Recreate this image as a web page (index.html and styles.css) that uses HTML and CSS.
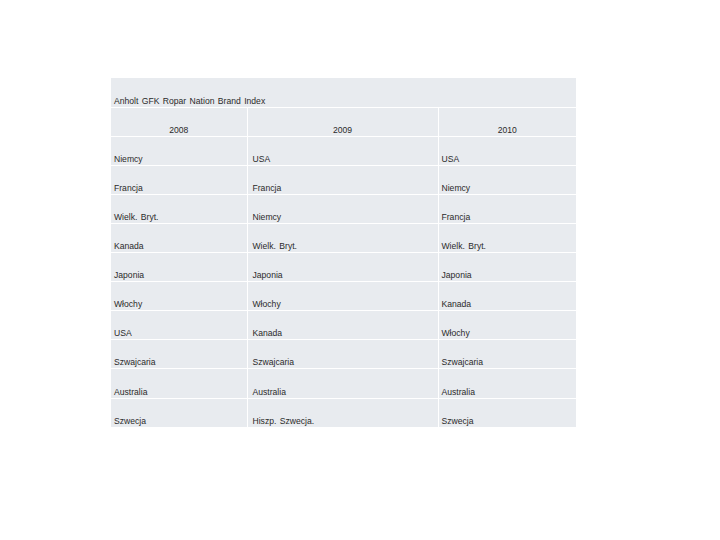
FILE: index.html
```html
<!DOCTYPE html>
<html>
<head>
<meta charset="utf-8">
<link rel="stylesheet" href="styles.css">
</head>
<body>
<table class="brand">
  <colgroup>
    <col class="c1">
    <col class="c2">
    <col class="c3">
  </colgroup>
  <tr class="title"><td colspan="3">Anholt GFK Ropar Nation Brand Index</td></tr>
  <tr class="years"><td>2008</td><td>2009</td><td>2010</td></tr>
  <tr><td>Niemcy</td><td>USA</td><td>USA</td></tr>
  <tr><td>Francja</td><td>Francja</td><td>Niemcy</td></tr>
  <tr><td>Wielk. Bryt.</td><td>Niemcy</td><td>Francja</td></tr>
  <tr><td>Kanada</td><td>Wielk. Bryt.</td><td>Wielk. Bryt.</td></tr>
  <tr><td>Japonia</td><td>Japonia</td><td>Japonia</td></tr>
  <tr><td>Włochy</td><td>Włochy</td><td>Kanada</td></tr>
  <tr><td>USA</td><td>Kanada</td><td>Włochy</td></tr>
  <tr><td>Szwajcaria</td><td>Szwajcaria</td><td>Szwajcaria</td></tr>
  <tr><td>Australia</td><td>Australia</td><td>Australia</td></tr>
  <tr><td>Szwecja</td><td>Hiszp. Szwecja.</td><td>Szwecja</td></tr>
</table>
</body>
</html>
```
FILE: styles.css
```css
html, body {
  margin: 0;
  padding: 0;
  background: #ffffff;
}
body {
  padding: 78px 0 0 111px;
  font-family: "Liberation Sans", Arial, sans-serif;
  font-size: 8.6px;
  word-spacing: 1px;
  color: #2a2a2a;
}
.brand {
  border-collapse: collapse;
  width: 465px;
  table-layout: fixed;
}
.brand .c1 { width: 136px; }
.brand .c2 { width: 191px; }
.brand .c3 { width: 138px; }
.brand td {
  background: #e8ebef;
  border: 1.5px solid #ffffff;
  height: 29.1px;
  box-sizing: border-box;
  padding: 0 3px 1px 3px;
  vertical-align: bottom;
  text-align: left;
  white-space: nowrap;
}
.brand tr:first-child td { border-top: none; }
.brand td:first-child { border-left: none; }
.brand td:nth-child(2) { padding-left: 5px; }
.brand td:last-child { border-right: none; }
.brand tr:last-child td { border-bottom: none; }
.brand .years td { text-align: center; padding-left: 3px; }
```
